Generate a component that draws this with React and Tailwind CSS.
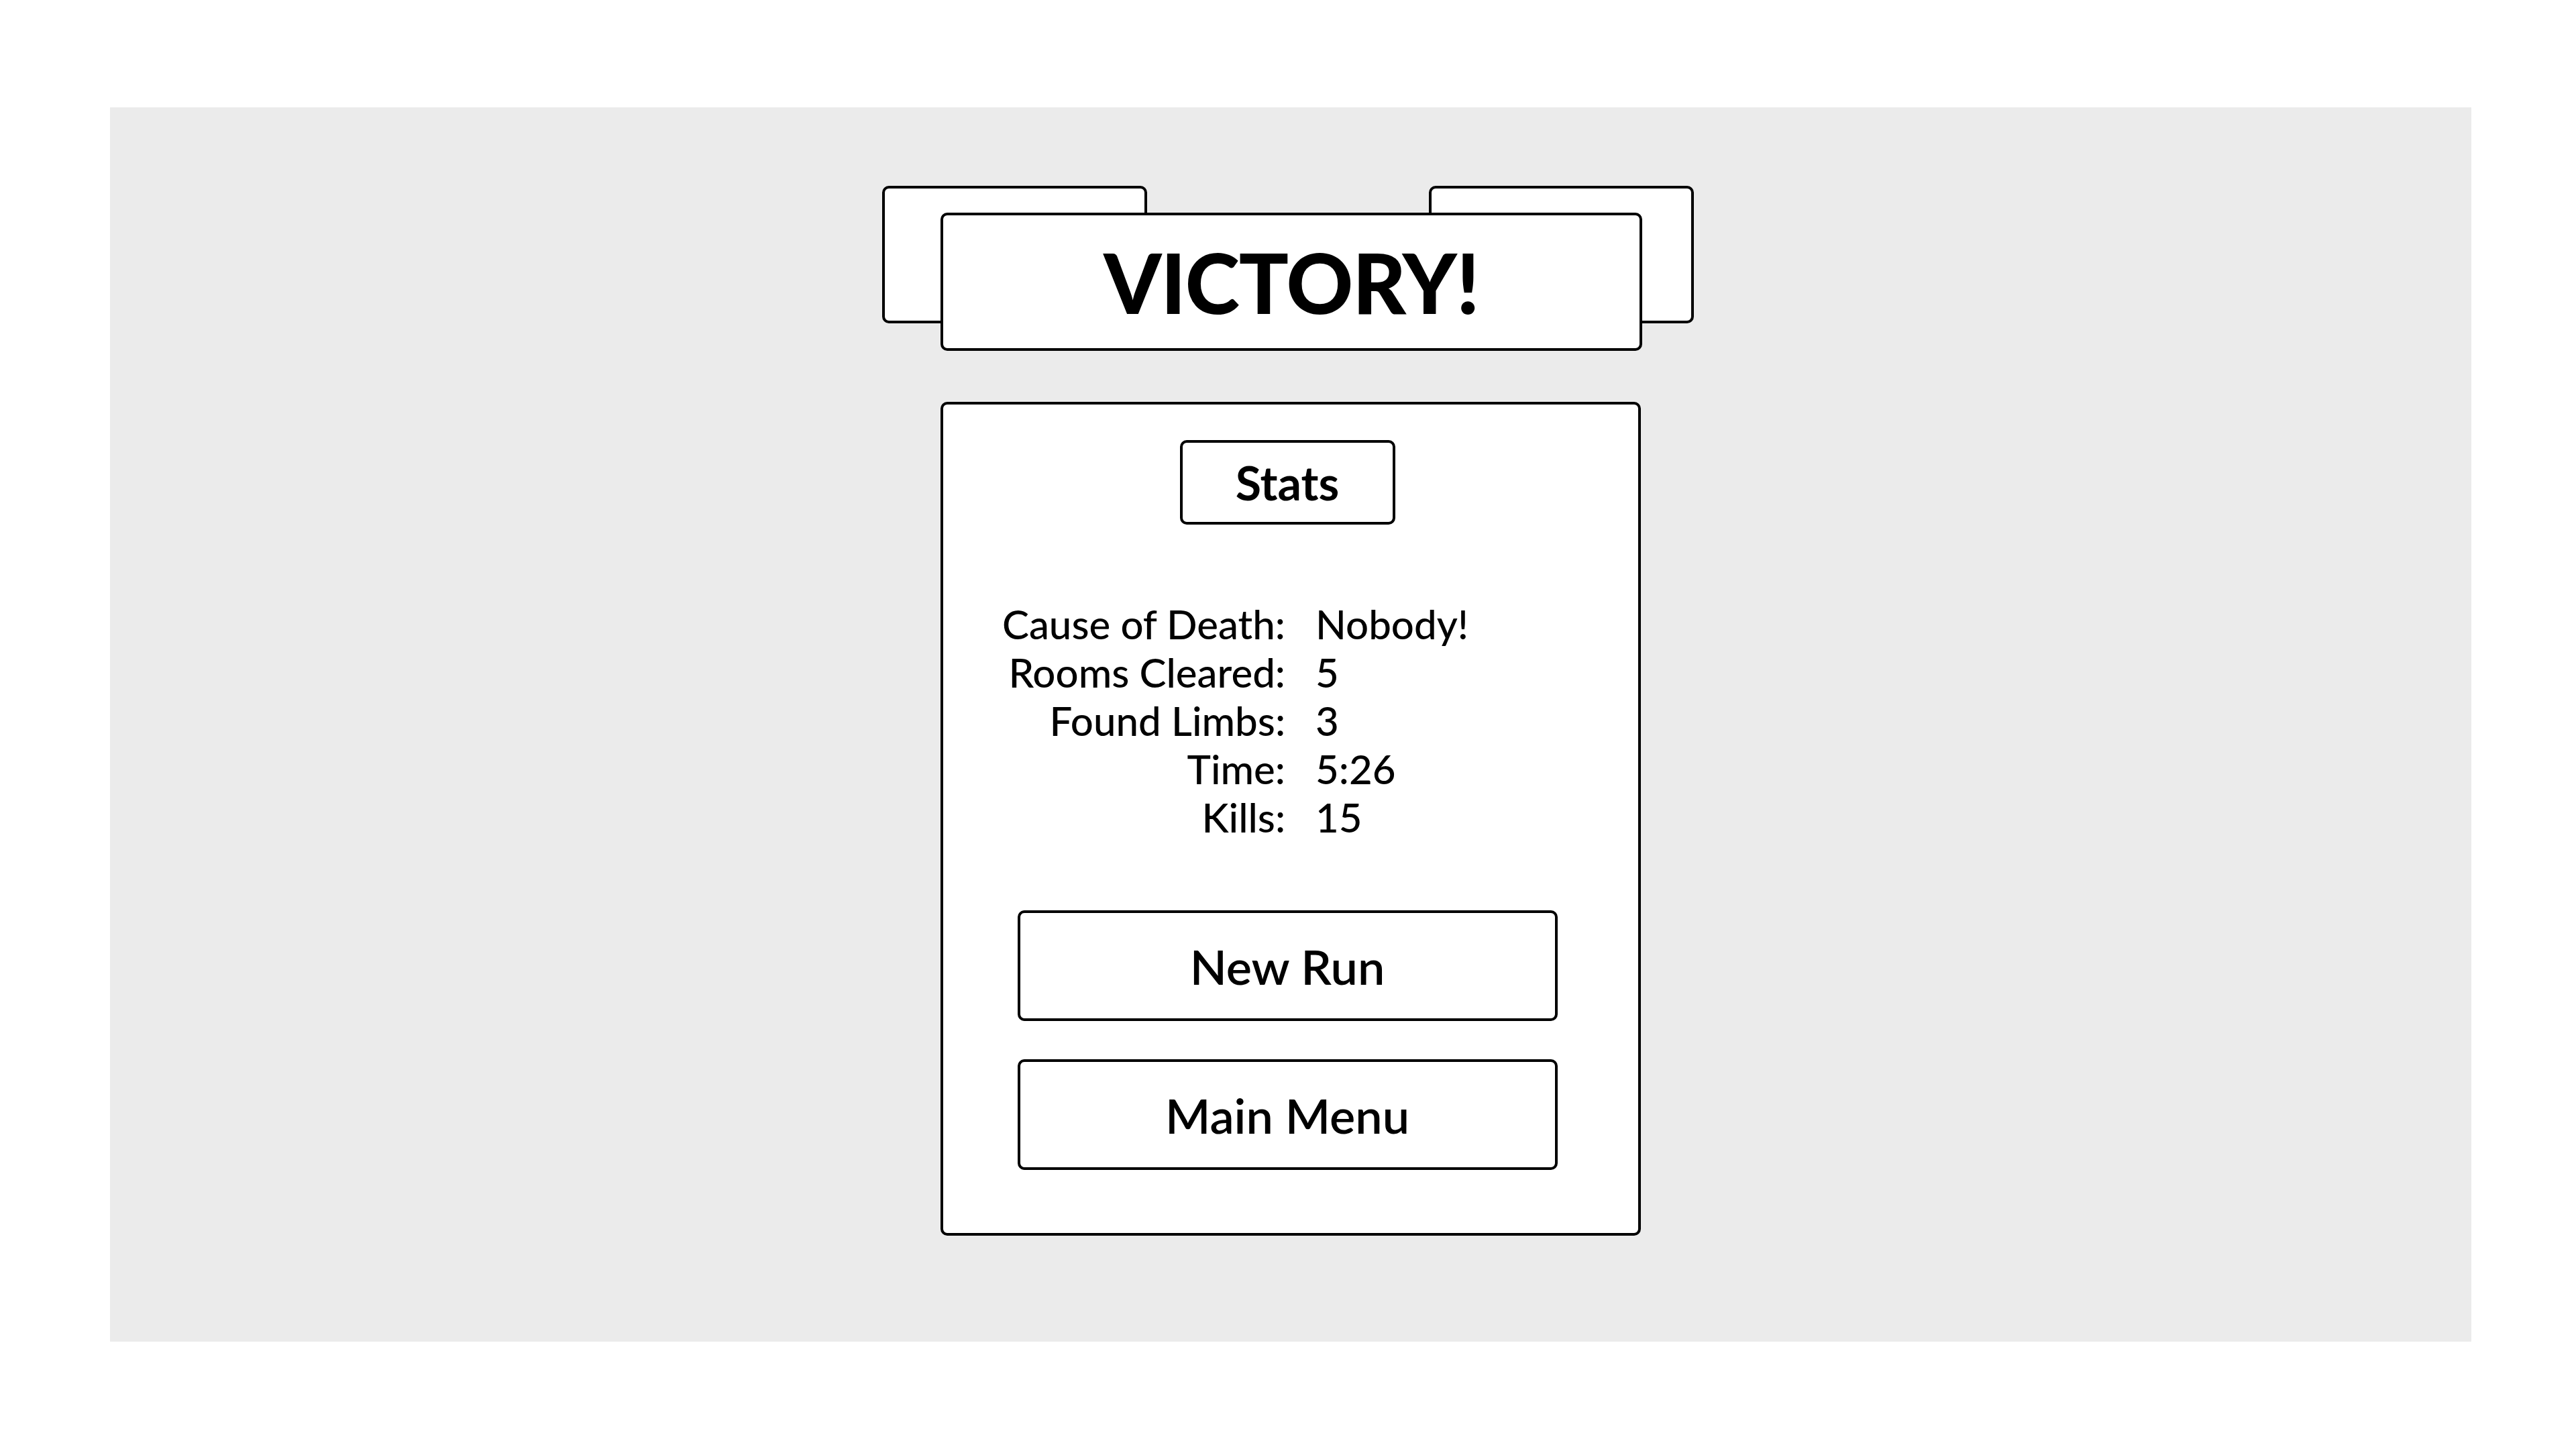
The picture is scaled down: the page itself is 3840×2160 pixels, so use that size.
import React from 'react';

const stats = [
    ['Cause of Death:', 'Nobody!'],
    ['Rooms Cleared:', '5'],
    ['Found Limbs:', '3'],
    ['Time:', '5:26'],
    ['Kills:', '15'],
];

const Button = ({ children }) => (
    <button className="w-[805px] h-[165px] border-4 border-black rounded-[10px] bg-white text-[72px] font-semibold leading-none text-black">
        {children}
    </button>
);

const App = () => {
    return (
        <div className="w-full h-[2160px] bg-white pl-[164px] pr-[156px] py-[160px] font-['Lato','Liberation_Sans',sans-serif] text-black">
            <div className="w-full h-full bg-[#ebebeb] flex flex-col items-center pt-[117px]">
                {/* Banner */}
                <div className="relative w-[1046px] h-[246px] ml-[2px]">
                    <div className="absolute left-[-87px] top-0 w-[395px] h-[205px] bg-white border-4 border-black rounded-[10px]" />
                    <div className="absolute right-[-77px] top-0 w-[395px] h-[205px] bg-white border-4 border-black rounded-[10px]" />
                    <div className="relative mt-[40px] w-full h-[206px] bg-white border-4 border-black rounded-[10px] flex items-center justify-center">
                        <h1 className="text-[123px] font-black leading-none tracking-[-1px]">VICTORY!</h1>
                    </div>
                </div>

                {/* Stats panel */}
                <div className="mt-[76px] w-[1044px] bg-white border-4 border-black rounded-[10px] flex flex-col items-center pt-[53px] pb-[94px] pr-[10px]">
                    <div className="w-[321px] h-[126px] border-4 border-black rounded-[10px] flex items-center justify-center">
                        <span className="text-[70px] font-bold leading-none">Stats</span>
                    </div>

                    <div className="mt-[112px] self-stretch grid grid-cols-[510px_1fr] gap-x-[45px] text-[60px] font-medium leading-[72px]">
                        {stats.map(([label, value]) => (
                            <React.Fragment key={label}>
                                <div className="text-right">{label}</div>
                                <div>{value}</div>
                            </React.Fragment>
                        ))}
                    </div>

                    <div className="mt-[103px] flex flex-col gap-[57px]">
                        <Button>New Run</Button>
                        <Button>Main Menu</Button>
                    </div>
                </div>
            </div>
        </div>
    );
};

export default App;
